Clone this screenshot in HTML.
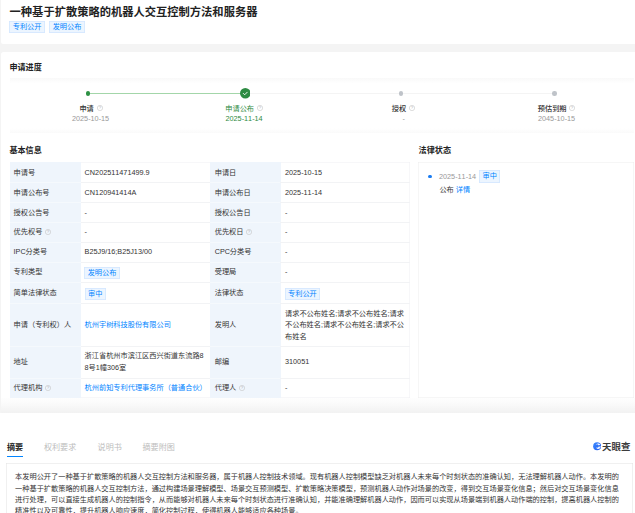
<!DOCTYPE html>
<html lang="zh-CN">
<head>
<meta charset="utf-8">
<title>一种基于扩散策略的机器人交互控制方法和服务器</title>
<style>
*{box-sizing:border-box;margin:0;padding:0}
html,body{width:635px;height:513px;overflow:hidden;background:#f4f4f4}
body{position:relative;font-family:"Liberation Sans","Noto Sans CJK SC",sans-serif;font-size:7.2px;line-height:11.5px;color:#333;-webkit-font-smoothing:antialiased}
.abs{position:absolute}
.card{position:absolute;background:#fff;left:1.3px;right:0;border-radius:2.5px 0 0 2.5px}
.t{position:absolute;white-space:nowrap}
.h{position:absolute;white-space:nowrap;font-weight:700;font-size:8.1px;line-height:12px;color:#222}
.tag{position:absolute;white-space:nowrap;height:12.3px;line-height:12.3px;padding:0 3.45px;font-size:7.2px;color:#0084ff;background:#ecf5ff;box-shadow:inset 0 0 0 0.5px #c4deff;border-radius:1px}
.en{font-size:7.28px;font-kerning:none}
.blue{color:#0084ff}
.gray{color:#999}
.q{position:absolute;width:6px;height:6px;margin:-0.2px 0 0 -0.2px;overflow:visible}
/* table */
</style>
</head>
<body>

<!-- card 1 : title -->
<div class="card" style="top:-3px;height:47.3px"></div>
<div class="t" style="left:9.6px;top:3.7px;font-size:11.28px;line-height:16px;font-weight:700;color:#222">一种基于扩散策略的机器人交互控制方法和服务器</div>
<div class="tag" style="left:9.3px;top:21.1px">专利公开</div>
<div class="tag" style="left:49.2px;top:21.1px">发明公布</div>

<!-- card 2 -->
<div class="card" style="top:51.8px;height:361px"></div>
<div class="abs" style="left:0;right:0;top:398px;height:14.9px;background:linear-gradient(to bottom,#fefefe 0%,#fcfcfc 22%,#f9f9f9 48%,#f5f5f5 75%,#f2f2f2 100%)"></div>
<div class="abs" style="left:0;width:1.3px;top:398px;height:14.9px;background:#f4f4f4"></div>
<div class="h" style="left:9.4px;top:62.0px">申请进度</div>

<!-- timeline panel -->
<div class="abs" style="left:9.5px;width:624px;top:77.5px;height:55.9px;background:linear-gradient(to bottom,#f9f9f9 0,#fff 5.5px,#fff 50.4px,#f9f9f9 55.9px)"></div>
<div class="abs" style="left:88px;width:466px;top:92.8px;height:1.3px;background:#f4f4f4"></div>
<div class="abs" style="left:88px;width:154px;top:92.8px;height:1.3px;background:#a3d6a9"></div>
<div class="abs" style="left:86.1px;top:91.3px;width:4.3px;height:4.3px;border-radius:50%;background:#2e9144"></div>
<svg class="abs" style="left:239.6px;top:88.1px" width="10.6" height="10.6" viewBox="0 0 24 24"><circle cx="12" cy="12" r="12" fill="#2e8b43"/><path d="M7.6 12.3l3 3L16.4 9.5" fill="none" stroke="#fff" stroke-width="2.1" stroke-linecap="round" stroke-linejoin="round"/></svg>
<div class="abs" style="left:398.6px;top:91.2px;width:4.5px;height:4.5px;border-radius:50%;background:#bfc3c9"></div>
<div class="abs" style="left:552px;top:91.2px;width:4.5px;height:4.5px;border-radius:50%;background:#bfc3c9"></div>

<div class="t" style="left:79.4px;top:102.7px;font-weight:500">申请</div><svg class="q" style="left:96.8px;top:105.0px" viewBox="0 0 12 12"><circle cx="6" cy="6" r="5.3" fill="none" stroke="#c0c0c0" stroke-width="1.05"/><text x="6" y="8.9" font-size="8.5" text-anchor="middle" fill="#b4b4b4" font-family="Liberation Sans, sans-serif">?</text></svg>
<div class="t gray en" style="left:72px;top:113.1px">2025-10-15</div>

<div class="t" style="left:225.3px;top:102.7px;font-weight:400;color:#2e8b43">申请公布</div><svg class="q" style="left:257.1px;top:105.0px" viewBox="0 0 12 12"><circle cx="6" cy="6" r="5.3" fill="none" stroke="#c0c0c0" stroke-width="1.05"/><text x="6" y="8.9" font-size="8.5" text-anchor="middle" fill="#b4b4b4" font-family="Liberation Sans, sans-serif">?</text></svg>
<div class="t en" style="left:225.5px;top:113.1px;color:#2e8b43;font-weight:500">2025-11-14</div>

<div class="t" style="left:391.8px;top:102.7px;font-weight:500">授权</div><svg class="q" style="left:409.4px;top:105.0px" viewBox="0 0 12 12"><circle cx="6" cy="6" r="5.3" fill="none" stroke="#c0c0c0" stroke-width="1.05"/><text x="6" y="8.9" font-size="8.5" text-anchor="middle" fill="#b4b4b4" font-family="Liberation Sans, sans-serif">?</text></svg>
<div class="t gray" style="left:402.4px;top:113.1px">-</div>

<div class="t" style="left:537.8px;top:102.7px;font-weight:500">预估到期</div><svg class="q" style="left:569.5px;top:105.0px" viewBox="0 0 12 12"><circle cx="6" cy="6" r="5.3" fill="none" stroke="#c0c0c0" stroke-width="1.05"/><text x="6" y="8.9" font-size="8.5" text-anchor="middle" fill="#b4b4b4" font-family="Liberation Sans, sans-serif">?</text></svg>
<div class="t gray en" style="left:538px;top:113.1px">2045-10-15</div>

<!-- basic info -->
<div class="h" style="left:9.4px;top:144.7px">基本信息</div>
<div class="h" style="left:418.6px;top:144.7px">法律状态</div>

<!-- table -->
<div class="abs" style="left:9.5px;top:162px;width:400.5px;height:236px;background:#fff;box-shadow:inset -0.5px 0 0 0 #eff0f3,inset 0 0.5px 0 0 #eff0f3,inset 0 -0.5px 0 0 #eff0f3"></div>
<div class="abs" style="left:9.5px;top:162px;width:71.1px;height:236px;background:#eff5fc"></div>
<div class="abs" style="left:209.9px;top:162px;width:70.8px;height:236px;background:#eff5fc"></div>
<div class="abs" style="left:9.5px;top:181.75px;width:400.5px;height:0.5px;background:#f2f3f5"></div>
<div class="abs" style="left:9.5px;top:181.75px;width:71.1px;height:0.5px;background:#f5f9fd"></div>
<div class="abs" style="left:209.9px;top:181.75px;width:70.5px;height:0.5px;background:#f5f9fd"></div>
<div class="abs" style="left:9.5px;top:201.75px;width:400.5px;height:0.5px;background:#f2f3f5"></div>
<div class="abs" style="left:9.5px;top:201.75px;width:71.1px;height:0.5px;background:#f5f9fd"></div>
<div class="abs" style="left:209.9px;top:201.75px;width:70.5px;height:0.5px;background:#f5f9fd"></div>
<div class="abs" style="left:9.5px;top:221.75px;width:400.5px;height:0.5px;background:#f2f3f5"></div>
<div class="abs" style="left:9.5px;top:221.75px;width:71.1px;height:0.5px;background:#f5f9fd"></div>
<div class="abs" style="left:209.9px;top:221.75px;width:70.5px;height:0.5px;background:#f5f9fd"></div>
<div class="abs" style="left:9.5px;top:241.75px;width:400.5px;height:0.5px;background:#f2f3f5"></div>
<div class="abs" style="left:9.5px;top:241.75px;width:71.1px;height:0.5px;background:#f5f9fd"></div>
<div class="abs" style="left:209.9px;top:241.75px;width:70.5px;height:0.5px;background:#f5f9fd"></div>
<div class="abs" style="left:9.5px;top:261.75px;width:400.5px;height:0.5px;background:#f2f3f5"></div>
<div class="abs" style="left:9.5px;top:261.75px;width:71.1px;height:0.5px;background:#f5f9fd"></div>
<div class="abs" style="left:209.9px;top:261.75px;width:70.5px;height:0.5px;background:#f5f9fd"></div>
<div class="abs" style="left:9.5px;top:282.25px;width:400.5px;height:0.5px;background:#f2f3f5"></div>
<div class="abs" style="left:9.5px;top:282.25px;width:71.1px;height:0.5px;background:#f5f9fd"></div>
<div class="abs" style="left:209.9px;top:282.25px;width:70.5px;height:0.5px;background:#f5f9fd"></div>
<div class="abs" style="left:9.5px;top:302.95px;width:400.5px;height:0.5px;background:#f2f3f5"></div>
<div class="abs" style="left:9.5px;top:302.95px;width:71.1px;height:0.5px;background:#f5f9fd"></div>
<div class="abs" style="left:209.9px;top:302.95px;width:70.5px;height:0.5px;background:#f5f9fd"></div>
<div class="abs" style="left:9.5px;top:345.75px;width:400.5px;height:0.5px;background:#f2f3f5"></div>
<div class="abs" style="left:9.5px;top:345.75px;width:71.1px;height:0.5px;background:#f5f9fd"></div>
<div class="abs" style="left:209.9px;top:345.75px;width:70.5px;height:0.5px;background:#f5f9fd"></div>
<div class="abs" style="left:9.5px;top:377.55px;width:400.5px;height:0.5px;background:#f2f3f5"></div>
<div class="abs" style="left:9.5px;top:377.55px;width:71.1px;height:0.5px;background:#f5f9fd"></div>
<div class="abs" style="left:209.9px;top:377.55px;width:70.5px;height:0.5px;background:#f5f9fd"></div>
<div class="t" style="left:13.6px;top:166.95px">申请号</div>
<div class="t en" style="left:84.6px;top:166.95px">CN202511471499.9</div>
<div class="t" style="left:214.7px;top:166.95px">申请日</div>
<div class="t en" style="left:285.0px;top:166.95px">2025-10-15</div>
<div class="t" style="left:13.6px;top:186.75px">申请公布号</div>
<div class="t en" style="left:84.6px;top:186.75px">CN120941414A</div>
<div class="t" style="left:214.7px;top:186.75px">申请公布日</div>
<div class="t en" style="left:285.0px;top:186.75px">2025-11-14</div>
<div class="t" style="left:13.6px;top:206.65px">授权公告号</div>
<div class="t" style="left:84.6px;top:206.65px">-</div>
<div class="t" style="left:214.7px;top:206.65px">授权公告日</div>
<div class="t" style="left:285.0px;top:206.65px">-</div>
<div class="t" style="left:13.6px;top:226.35px">优先权号</div>
<svg class="q" style="left:45.2px;top:229.4px" viewBox="0 0 12 12"><circle cx="6" cy="6" r="5.3" fill="none" stroke="#c0c0c0" stroke-width="1.05"/><text x="6" y="8.9" font-size="8.5" text-anchor="middle" fill="#b4b4b4" font-family="Liberation Sans, sans-serif">?</text></svg>
<div class="t" style="left:84.6px;top:226.35px">-</div>
<div class="t" style="left:214.7px;top:226.35px">优先权日</div>
<svg class="q" style="left:246.2px;top:229.4px" viewBox="0 0 12 12"><circle cx="6" cy="6" r="5.3" fill="none" stroke="#c0c0c0" stroke-width="1.05"/><text x="6" y="8.9" font-size="8.5" text-anchor="middle" fill="#b4b4b4" font-family="Liberation Sans, sans-serif">?</text></svg>
<div class="t" style="left:285.0px;top:226.35px">-</div>
<div class="t" style="left:13.6px;top:246.25px">IPC分类号</div>
<div class="t en" style="left:84.6px;top:246.25px">B25J9/16;B25J13/00</div>
<div class="t" style="left:214.7px;top:246.25px">CPC分类号</div>
<div class="t" style="left:285.0px;top:246.25px">-</div>
<div class="t" style="left:13.6px;top:266.45px">专利类型</div>
<div class="tag" style="left:84.2px;top:266.70px">发明公布</div>
<div class="t" style="left:214.7px;top:266.45px">受理局</div>
<div class="t" style="left:285.0px;top:266.45px">-</div>
<div class="t" style="left:13.6px;top:287.35px">简单法律状态</div>
<div class="tag" style="left:84.5px;top:287.50px">审中</div>
<div class="t" style="left:214.7px;top:287.35px">法律状态</div>
<div class="tag" style="left:284.6px;top:287.50px">专利公开</div>
<div class="t" style="left:13.6px;top:319.15px">申请（专利权）人</div>
<div class="t blue" style="left:84.6px;top:319.15px">杭州宇树科技股份有限公司</div>
<div class="t" style="left:214.7px;top:319.15px">发明人</div>
<div class="t" style="left:285.0px;top:307.55px">请求不公布姓名;请求不公布姓名;请求<br>不公布姓名;请求不公布姓名;请求不公<br>布姓名</div>
<div class="t" style="left:13.6px;top:356.15px">地址</div>
<div class="t" style="left:84.6px;top:350.4px">浙江省杭州市滨江区西兴街道东流路8<br>8号1幢306室</div>
<div class="t" style="left:214.7px;top:356.15px">邮编</div>
<div class="t en" style="left:285.0px;top:356.15px">310051</div>
<div class="t" style="left:13.6px;top:381.55px">代理机构</div>
<svg class="q" style="left:45.2px;top:384.8px" viewBox="0 0 12 12"><circle cx="6" cy="6" r="5.3" fill="none" stroke="#c0c0c0" stroke-width="1.05"/><text x="6" y="8.9" font-size="8.5" text-anchor="middle" fill="#b4b4b4" font-family="Liberation Sans, sans-serif">?</text></svg>
<div class="t blue" style="left:84.6px;top:381.55px">杭州前知专利代理事务所（普通合伙）</div>
<div class="t" style="left:214.7px;top:381.55px">代理人</div>
<svg class="q" style="left:239.0px;top:384.8px" viewBox="0 0 12 12"><circle cx="6" cy="6" r="5.3" fill="none" stroke="#c0c0c0" stroke-width="1.05"/><text x="6" y="8.9" font-size="8.5" text-anchor="middle" fill="#b4b4b4" font-family="Liberation Sans, sans-serif">?</text></svg>
<div class="t" style="left:285.0px;top:381.55px">-</div>
<!-- legal status -->
<div class="abs" style="left:418.2px;top:162px;width:215.6px;height:235.6px;background:#fff;box-shadow:inset 0 0 0 0.5px #ededed"></div>
<div class="abs" style="left:428.4px;top:174.5px;width:3.5px;height:3.5px;border-radius:50%;background:#1a7cf2"></div>
<div class="t gray en" style="left:439px;top:170.5px">2025-11-14</div>
<div class="tag" style="left:479.1px;top:170.40px">审中</div>
<div class="t" style="left:439.4px;top:184.1px">公布 <span class="blue">详情</span></div>
<!-- tabs -->
<div class="abs" style="left:0;right:0;top:412.9px;height:101px;background:#fff"></div>
<div class="h" style="left:6.9px;top:441.9px">摘要</div>
<div class="abs" style="left:7px;top:455.8px;width:16.2px;height:1px;background:#0084ff"></div>
<div class="h" style="left:43.9px;top:441.9px;font-weight:400;color:#bdbdbd">权利要求</div>
<div class="h" style="left:97.6px;top:441.9px;font-weight:400;color:#bdbdbd">说明书</div>
<div class="h" style="left:142.5px;top:441.9px;font-weight:400;color:#bdbdbd">摘要附图</div>
<svg class="abs" style="left:592.5px;top:442.4px" width="8.3" height="8.3" viewBox="0 0 24 24"><defs><linearGradient id="lg" x1="0" y1="0" x2="1" y2="1"><stop offset="0" stop-color="#3d8bff"/><stop offset="1" stop-color="#1f5cf0"/></linearGradient></defs><circle cx="12" cy="12" r="11.6" fill="url(#lg)"/><path d="M21 7.2a8.2 8.2 0 0 0-13.5 1.6 6 6 0 0 1 9.2 1.3z" fill="#fff"/><path d="M23.5 12.2l-8.2 1.2a3.6 3.6 0 0 1-6.6 1.2 6.4 6.4 0 0 0 11.300 3.200 z" fill="#fff" opacity=".9"/></svg>
<div class="t" style="left:601.6px;top:440.9px;font-size:8.6px;line-height:13px;font-weight:700;color:#3c3c3c;transform:scaleX(1.1);transform-origin:0 50%">天眼查</div>
<div class="abs" style="left:6px;top:463.4px;width:626.6px;height:60px;box-shadow:inset 0 0 0 0.5px #e2e2e2;background:#fff"></div>
<div class="t" style="left:15.1px;top:471.4px;line-height:11.15px;color:#333">本发明公开了一种基于扩散策略的机器人交互控制方法和服务器，属于机器人控制技术领域。现有机器人控制模型缺乏对机器人未来每个时刻状态的准确认知，无法理解机器人动作。本发明的<br>一种基于扩散策略的机器人交互控制方法，通过构建场景理解模型、场景交互预测模型、扩散策略决策模型，预测机器人动作对场景的改变，得到交互场景变化信息；然后对交互场景变化信息<br>进行处理，可以直接生成机器人的控制指令，从而能够对机器人未来每个时刻状态进行准确认知，并能准确理解机器人动作，因而可以实现从场景端到机器人动作端的控制，提高机器人控制的<br>精准性以及可靠性，提升机器人响应速度，简化控制过程，使得机器人能够适应各种场景。</div>

</body>
</html>
